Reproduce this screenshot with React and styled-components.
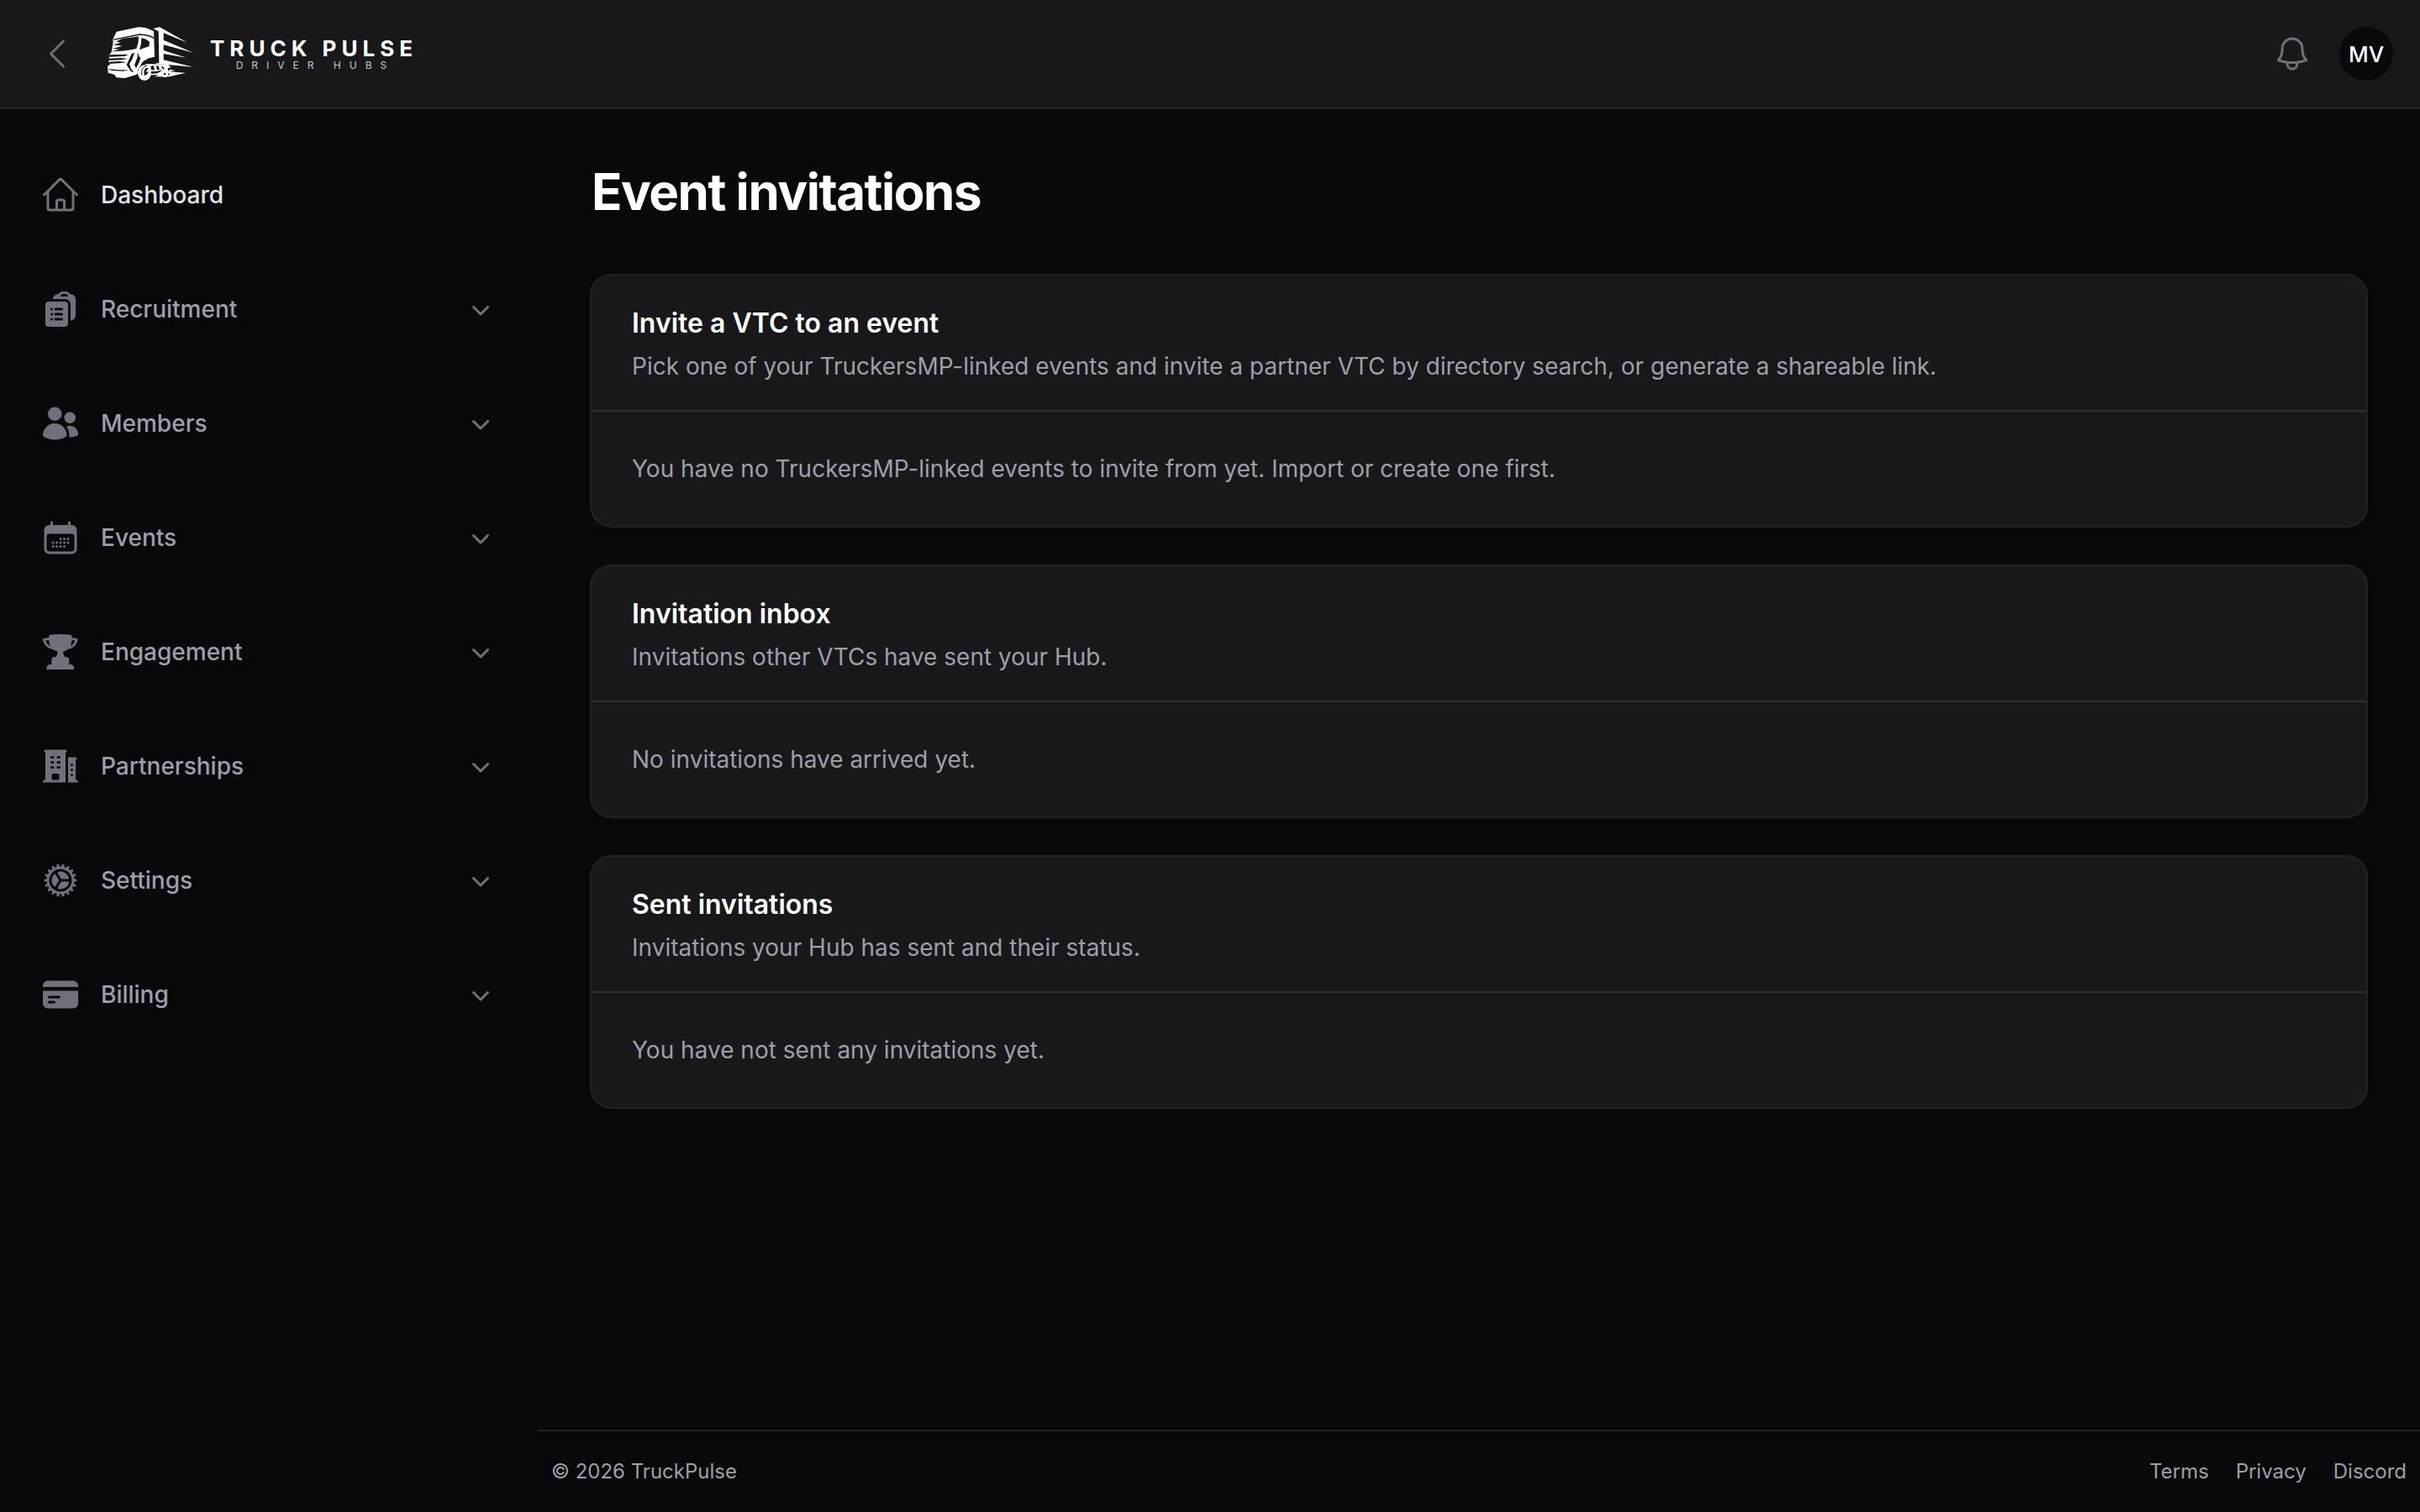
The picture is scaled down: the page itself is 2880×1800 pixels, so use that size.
import React from 'react';
import styled, { createGlobalStyle } from 'styled-components';
import {
  HiOutlineHome,
  HiOutlineBell,
  HiOutlineChevronLeft,
  HiClipboardDocumentList,
  HiUsers,
  HiCalendarDays,
  HiTrophy,
  HiBuildingOffice2,
  HiCog,
  HiCreditCard,
  HiMiniChevronDown,
} from 'react-icons/hi2';

const color = {
  page: '#09090b',
  surface: '#18181b',
  line: '#232326',
  divider: '#2f2f32',
  icon: '#71717b',
  muted: '#9f9fa9',
  bright: '#e4e4e7',
  white: '#ffffff',
};

const GlobalStyle = createGlobalStyle`
  *, *::before, *::after { box-sizing: border-box; }
  body {
    margin: 0;
    background: ${color.page};
    color: ${color.white};
    font-family: Inter, "Liberation Sans", sans-serif;
    -webkit-font-smoothing: antialiased;
  }
  h1, h2, p, ul { margin: 0; padding: 0; }
  ul { list-style: none; }
  a { color: inherit; text-decoration: none; }
  button { border: 0; padding: 0; background: none; color: inherit; font: inherit; cursor: pointer; }
`;

const Page = styled.div`
  display: flex;
  flex-direction: column;
  min-height: 100vh;
`;

const TopBar = styled.header`
  display: flex;
  align-items: center;
  gap: 32px;
  padding: 32px 32px 32px 44px;
  background: ${color.surface};
  border-bottom: 2px solid ${color.line};
`;

const IconButton = styled.button`
  display: flex;
  color: ${color.icon};
  svg { width: 48px; height: 48px; }
`;

const Brand = styled.a`
  display: flex;
  align-items: center;
  gap: 20px;
  margin-left: 4px;
  margin-right: auto;
`;

const TruckMark = styled.svg`
  width: 102px;
  height: 64px;
`;

const BrandText = styled.span`
  display: flex;
  flex-direction: column;
  align-items: center;
  padding-top: 4px;
`;

const BrandName = styled.span`
  margin-right: -6px;
  font-size: 26px;
  font-weight: 700;
  line-height: 24px;
  letter-spacing: 6px;
`;

const BrandTag = styled.span`
  margin-right: -10px;
  font-size: 12px;
  line-height: 16px;
  letter-spacing: 10px;
  color: #c8c8cc;
`;

const Avatar = styled.button`
  width: 64px;
  height: 64px;
  border-radius: 50%;
  background: ${color.page};
  font-size: 26px;
  font-weight: 500;
`;

const Columns = styled.div`
  flex: 1;
  display: grid;
  grid-template-columns: 640px minmax(0, 1fr);
`;

const Sidebar = styled.nav`
  padding: 68px 48px;
`;

const NavList = styled.ul`
  display: flex;
  flex-direction: column;
  gap: 68px;
`;

const NavItem = styled.button`
  display: flex;
  align-items: center;
  gap: 24px;
  width: 100%;
  height: 68px;
  color: ${(p) => (p.$current ? color.bright : color.muted)};
  font-size: 28px;
  font-weight: 500;
  line-height: 40px;
  text-align: left;
`;

const NavIcon = styled.span`
  display: flex;
  color: ${color.icon};
  svg { width: ${(p) => p.$size}px; height: ${(p) => p.$size}px; }
`;

const NavLabel = styled.span`
  flex: 1;
`;

const Content = styled.div`
  display: flex;
  flex-direction: column;
`;

const Main = styled.main`
  flex: 1;
  display: flex;
  flex-direction: column;
  gap: 48px;
  padding: 62px 64px;
`;

const Title = styled.h1`
  margin-bottom: 16px;
  font-size: 60px;
  font-weight: 700;
  line-height: 72px;
  letter-spacing: -0.025em;
`;

const Card = styled.section`
  border-radius: 24px;
  background: ${color.surface};
  box-shadow: 0 0 0 2px ${color.line};
`;

const CardHeader = styled.div`
  display: flex;
  flex-direction: column;
  gap: 7px;
  padding: 33px 48px 32px;
`;

const CardTitle = styled.h2`
  font-size: 32px;
  font-weight: 600;
  line-height: 48px;
`;

const CardText = styled.p`
  color: ${color.muted};
  font-size: 28px;
  line-height: 40px;
`;

const CardBody = styled.div`
  padding: 48px;
  border-top: 2px solid ${color.divider};
`;

const Footer = styled.footer`
  display: flex;
  justify-content: space-between;
  padding: 32px 16px;
  border-top: 2px solid ${color.line};
  color: ${color.muted};
  font-size: 24px;
  line-height: 32px;
`;

const FooterLinks = styled.div`
  display: flex;
  gap: 32px;
`;

const navItems = [
  { label: 'Recruitment', Icon: HiClipboardDocumentList },
  { label: 'Members', Icon: HiUsers },
  { label: 'Events', Icon: HiCalendarDays },
  { label: 'Engagement', Icon: HiTrophy },
  { label: 'Partnerships', Icon: HiBuildingOffice2 },
  { label: 'Settings', Icon: HiCog },
  { label: 'Billing', Icon: HiCreditCard },
];

const cards = [
  {
    title: 'Invite a VTC to an event',
    text: 'Pick one of your TruckersMP-linked events and invite a partner VTC by directory search, or generate a shareable link.',
    body: 'You have no TruckersMP-linked events to invite from yet. Import or create one first.',
  },
  {
    title: 'Invitation inbox',
    text: 'Invitations other VTCs have sent your Hub.',
    body: 'No invitations have arrived yet.',
  },
  {
    title: 'Sent invitations',
    text: 'Invitations your Hub has sent and their status.',
    body: 'You have not sent any invitations yet.',
  },
];

function Truck() {
  const dark = color.surface;
  return (
    <TruckMark viewBox="384 96 306 192" aria-hidden="true">
      {/* cab */}
      <path
        fill="#fff"
        d="M416 113L494 97L520 99L549 111L552 203L530 208L512 226L498 252L488 266L446 279L416 277L408 266L386 260L384 236L394 230L386 226L390 205L388 198L398 186L404 150L402 142Z"
      />
      <path fill="none" stroke={dark} strokeWidth="4" d="M404 142L498 123Q530 124 550 136" />
      {/* windscreen and side window */}
      <path fill={dark} d="M414 148L438 138L495 130Q496 152 487 174Q440 184 398 184L426 176L402 174L436 164L404 160L430 152Z" />
      <path fill={dark} d="M505 136Q522 138 534 150L532 166Q516 170 498 178Q506 158 505 136Z" />
      {/* grille slits */}
      <path fill={dark} d="M388 196L458 194L446 201L388 203Z" />
      <path fill={dark} d="M384 209L432 207L458 210L430 214L384 216Z" />
      <path fill={dark} d="M384 221L426 219L454 223L424 226L384 228Z" />
      <path fill={dark} d="M384 246L430 250L460 250L440 254L400 252Z" />
      {/* front corner */}
      <path fill={dark} d="M470 192L480 188L472 212L462 228L468 246L478 258L468 256L452 232Z" />
      <path fill={dark} d="M492 186L490 206L480 232L486 244L496 224L502 208L496 200Z" />
      <path fill={dark} d="M506 226Q520 206 552 206L552 212Q526 212 514 228L500 250L492 262L492 250Z" />
      {/* trailer face and speed lines */}
      <path
        fill="#fff"
        d="M547 102L570 97L669 152L584 118L584 143L690 188L584 160L584 180L666 206L584 192L584 214L690 239L606 232L552 228L568 224L566 112Z"
      />
      {/* chassis */}
      <path fill="#fff" d="M520 228L600 230L610 240L596 246L625 252L604 256L663 260L604 274L520 274Z" />
      <path fill={dark} d="M538 236L548 234L552 250L540 250ZM558 234L566 236L570 250L560 248ZM576 236L582 238L588 248L580 246Z" />
      <path fill={dark} d="M530 256L560 254L582 250L562 262L532 264ZM534 268L566 268L548 276L534 276Z" />
      {/* wheels */}
      <ellipse fill="#fff" cx="516" cy="260" rx="24" ry="28" />
      <path fill="none" stroke={dark} strokeWidth="3" d="M526 233Q502 240 506 268" />
      <path fill={dark} d="M522 242Q510 252 516 270Q526 268 530 256L520 258L530 244Z" />
      <circle fill="#fff" cx="588" cy="262" r="14" />
      <circle fill={dark} cx="588" cy="264" r="4" />
      <path fill={dark} d="M600 240L606 250L600 254ZM600 262L608 264L602 270Z" />
    </TruckMark>
  );
}

export default function App() {
  return (
    <Page>
      <GlobalStyle />
      <TopBar>
        <IconButton type="button" aria-label="Back">
          <HiOutlineChevronLeft />
        </IconButton>
        <Brand href="#">
          <Truck />
          <BrandText>
            <BrandName>TRUCK PULSE</BrandName>
            <BrandTag>DRIVER HUBS</BrandTag>
          </BrandText>
        </Brand>
        <IconButton type="button" aria-label="Notifications">
          <HiOutlineBell />
        </IconButton>
        <Avatar type="button">MV</Avatar>
      </TopBar>
      <Columns>
        <Sidebar>
          <NavList>
            <li>
              <NavItem as="a" href="#" $current>
                <NavIcon $size={48}><HiOutlineHome /></NavIcon>
                <NavLabel>Dashboard</NavLabel>
              </NavItem>
            </li>
            {navItems.map(({ label, Icon }) => (
              <li key={label}>
                <NavItem type="button" aria-expanded="false">
                  <NavIcon $size={48}><Icon /></NavIcon>
                  <NavLabel>{label}</NavLabel>
                  <NavIcon $size={40}><HiMiniChevronDown /></NavIcon>
                </NavItem>
              </li>
            ))}
          </NavList>
        </Sidebar>
        <Content>
          <Main>
            <Title>Event invitations</Title>
            {cards.map((card) => (
              <Card key={card.title}>
                <CardHeader>
                  <CardTitle>{card.title}</CardTitle>
                  <CardText>{card.text}</CardText>
                </CardHeader>
                <CardBody>
                  <CardText>{card.body}</CardText>
                </CardBody>
              </Card>
            ))}
          </Main>
          <Footer>
            <span>© 2026 TruckPulse</span>
            <FooterLinks>
              <a href="#">Terms</a>
              <a href="#">Privacy</a>
              <a href="#">Discord</a>
            </FooterLinks>
          </Footer>
        </Content>
      </Columns>
    </Page>
  );
}
